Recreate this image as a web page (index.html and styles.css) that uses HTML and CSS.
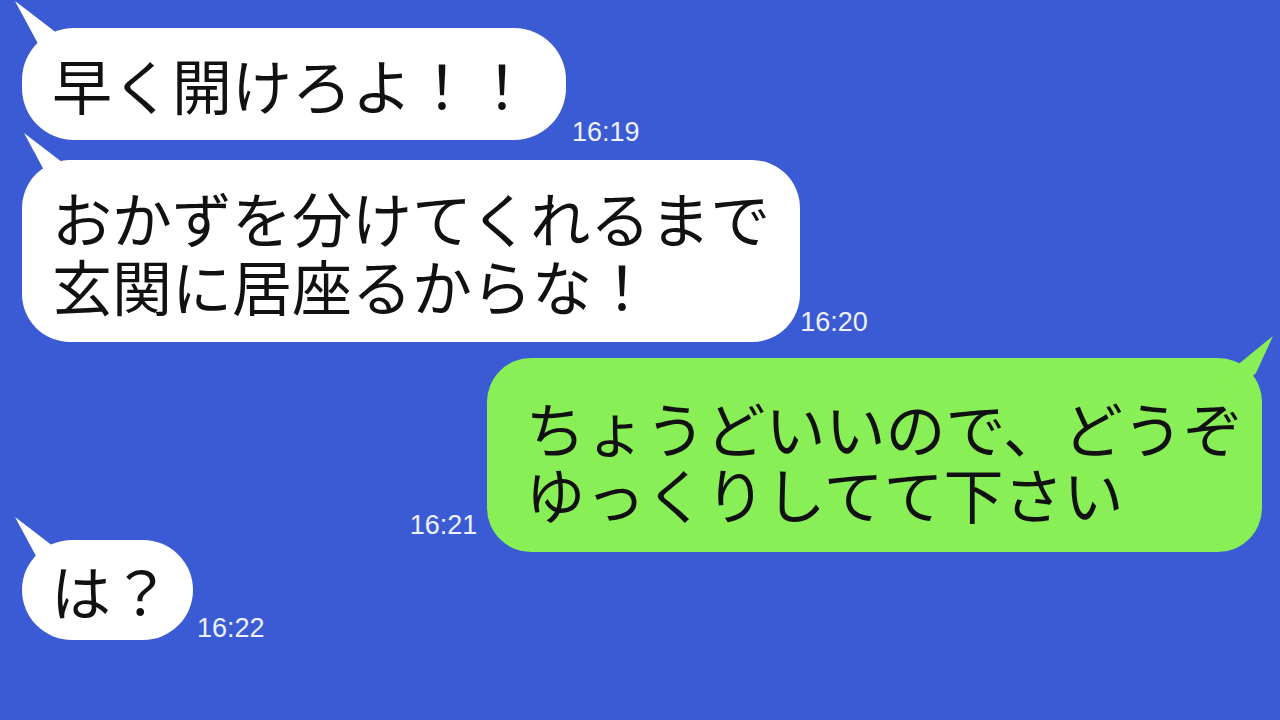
FILE: index.html
```html
<!DOCTYPE html>
<html lang="ja">
<head>
  <meta charset="UTF-8">
  <meta name="viewport" content="width=device-width, initial-scale=1.0">
  <title>Chat</title>
  <link rel="stylesheet" href="styles.css">
</head>
<body>

  <main class="chat">
    <div class="row row-1">
      <div class="bubble in b1">早く開けろよ！！</div>
      <span class="time t1">16:19</span>
    </div>

    <div class="row row-2">
      <div class="bubble in b2">おかずを分けてくれるまで<br>玄関に居座るからな！</div>
      <span class="time t2">16:20</span>
    </div>

    <div class="row row-3 mine">
      <span class="time t3">16:21</span>
      <div class="bubble out b3">ちょうどいいので、どうぞ<br>ゆっくりしてて下さい</div>
    </div>

    <div class="row row-4">
      <div class="bubble in b4">は？</div>
      <span class="time t4">16:22</span>
    </div>
  </main>

</body>
</html>
```

FILE: styles.css
```css
body {
  margin: 0;
  padding: 0;
  width: 1280px;
  height: 720px;
  overflow: hidden;
  background-color: #3b5bd5;
  font-family: "Noto Sans CJK JP", "Noto Sans", sans-serif;
}

.chat {
  padding: 28px 18px 0 22px;
}

.row {
  display: flex;
  align-items: flex-end;
}

.row.mine {
  justify-content: flex-end;
}

.row-2 {
  margin-top: 20px;
}

.row-3 {
  margin-top: 16px;
}

.row-4 {
  margin-top: -12px;
}

.bubble {
  position: relative;
  background-color: #fff;
  color: #111;
  font-size: 60px;
  line-height: 68px;
  white-space: nowrap;
  border-radius: 52px;
}

/* tails */
.bubble::before {
  content: "";
  position: absolute;
  background-color: inherit;
}

.in::before {
  left: -10px;
  top: -28px;
  width: 56px;
  height: 56px;
  clip-path: polygon(3px 1px, 50px 37px, 31px 53px);
}

.b2::before {
  left: -1px;
}

.b4::before {
  top: -24px;
}

.out {
  background-color: #89ef56;
}

.out::before {
  right: -14px;
  top: -24px;
  width: 60px;
  height: 72px;
  clip-path: polygon(57px 2px, 19px 33px, 6px 69px, 40px 39px);
}

.b1 {
  padding: 22px 34px 22px 30px;
}

.b2 {
  padding: 23px 30px 23px 30px;
  border-radius: 48px;
}

.b3 {
  padding: 36px 19px 26px 38px;
  line-height: 66px;
  border-radius: 44px;
}

.b4 {
  padding: 16px 22px 16px 29px;
  border-radius: 50px;
}

.time {
  font-family: "Liberation Sans", Arial, sans-serif;
  font-size: 27px;
  line-height: 27px;
  color: #eef1ff;
}

.t1 {
  margin: 0 0 -6px 6px;
}

.t2 {
  margin: 0 0 6px 0;
}

.t3 {
  margin: 0 10px 13px 0;
}

.t4 {
  margin: 0 0 -2px 4px;
}
```
